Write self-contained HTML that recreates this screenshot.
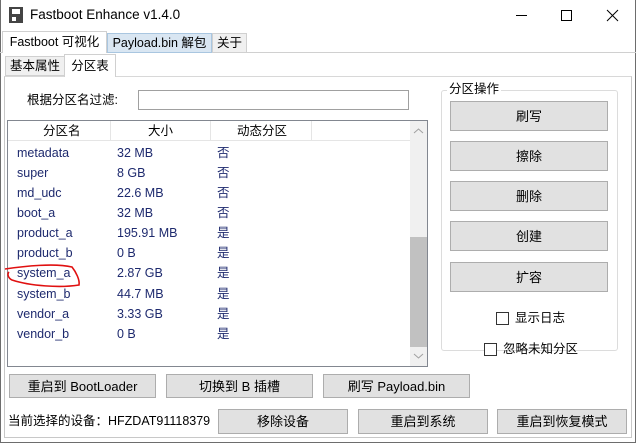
<!DOCTYPE html>
<html><head><meta charset="utf-8"><style>
*{margin:0;padding:0;box-sizing:border-box}
body{width:636px;height:443px;background:#fff;font-family:"Liberation Sans","Noto Sans CJK SC",sans-serif;font-size:12.5px;line-height:15px;color:#000;position:relative;overflow:hidden}
.a{position:absolute}
.btn{position:absolute;background:#e1e1e1;border:1px solid #adadad;text-align:center;font-size:13px;display:flex;align-items:center;justify-content:center}
.tab{position:absolute;border:1px solid #d0d0d0;background:#f0f0f0;font-size:12.5px;display:flex;align-items:center;justify-content:center}
.r{position:absolute;left:17px;color:#1e2a6e}
.c2{position:absolute;left:117px;color:#1e2a6e}
.c3{position:absolute;left:217px;color:#1e2a6e;margin-top:0}
.cb{position:absolute;width:13px;height:13px;border:1px solid #333;background:#fff}
</style></head><body>
<div class="a" style="left:0;top:0;width:636px;height:443px;border:1px solid #6d6d6d;border-top:none"></div>
<svg class="a" style="left:8px;top:6px" width="16" height="18"><rect x="1" y="1" width="14" height="16" fill="#444"/><rect x="4" y="3" width="8" height="5" fill="#fff"/><rect x="4" y="11" width="4" height="4" fill="#fff"/></svg>
<div class="a" style="left:30px;top:7px;font-size:13.5px">Fastboot Enhance v1.4.0</div>
<div class="a" style="left:516px;top:15px;width:11px;height:1px;background:#000"></div>
<div class="a" style="left:561px;top:10px;width:11px;height:11px;border:1px solid #000"></div>
<svg class="a" style="left:606px;top:9px" width="13" height="13"><path d="M1 1L12 12M12 1L1 12" stroke="#000" stroke-width="1"/></svg>
<div class="a" style="left:0;top:52px;width:636px;height:1px;background:#d0d0d0"></div>
<div class="tab" style="left:2px;top:31px;width:105px;height:22px;background:#fff;border-bottom:none">Fastboot 可视化</div>
<div class="tab" style="left:107px;top:33px;width:105px;height:20px;background:#d9e6f2;border-color:#a9c6e0">Payload.bin 解包</div>
<div class="tab" style="left:212px;top:33px;width:35px;height:20px">关于</div>
<div class="a" style="left:4px;top:76px;width:628px;height:362px;border:1px solid #c8c8c8;border-top-color:#d8d8d8"></div>
<div class="tab" style="left:5px;top:56px;width:60px;height:20px">基本属性</div>
<div class="tab" style="left:64px;top:54px;width:52px;height:23px;background:#fff;border-bottom:none">分区表</div>
<div class="a" style="left:27px;top:93px">根据分区名过滤:</div>
<div class="a" style="left:138px;top:90px;width:271px;height:20px;border:1px solid #a0a0a0"></div>
<div class="a" style="left:7px;top:120px;width:421px;height:247px;border:1px solid #828790"></div>
<div class="a" style="left:8px;top:121px;width:402px;height:20px;border-bottom:1px solid #e5e5e5"></div>
<div class="a" style="left:110px;top:121px;width:1px;height:20px;background:#e5e5e5"></div>
<div class="a" style="left:210px;top:121px;width:1px;height:20px;background:#e5e5e5"></div>
<div class="a" style="left:311px;top:121px;width:1px;height:20px;background:#e5e5e5"></div>
<div class="a" style="left:43px;top:124px">分区名</div>
<div class="a" style="left:148px;top:124px">大小</div>
<div class="a" style="left:237px;top:124px">动态分区</div>
<div class="a" style="left:410px;top:121px;width:17px;height:245px;background:#f0f0f0"></div>
<div class="a" style="left:410px;top:237px;width:17px;height:110px;background:#c1c1c1"></div>
<svg class="a" style="left:413px;top:127px" width="11" height="8"><path d="M1 6L5.5 2L10 6" stroke="#a0a0a0" fill="none"/></svg>
<svg class="a" style="left:413px;top:352px" width="11" height="8"><path d="M1 2L5.5 6L10 2" stroke="#a0a0a0" fill="none"/></svg>
<div class="r" style="top:146px">metadata</div><div class="c2" style="top:146px">32 MB</div><div class="c3" style="top:146px">否</div>
<div class="r" style="top:166px">super</div><div class="c2" style="top:166px">8 GB</div><div class="c3" style="top:166px">否</div>
<div class="r" style="top:186px">md_udc</div><div class="c2" style="top:186px">22.6 MB</div><div class="c3" style="top:186px">否</div>
<div class="r" style="top:206px">boot_a</div><div class="c2" style="top:206px">32 MB</div><div class="c3" style="top:206px">否</div>
<div class="r" style="top:226px">product_a</div><div class="c2" style="top:226px">195.91 MB</div><div class="c3" style="top:226px">是</div>
<div class="r" style="top:246px">product_b</div><div class="c2" style="top:246px">0 B</div><div class="c3" style="top:246px">是</div>
<div class="r" style="top:266px">system_a</div><div class="c2" style="top:266px">2.87 GB</div><div class="c3" style="top:266px">是</div>
<div class="r" style="top:287px">system_b</div><div class="c2" style="top:287px">44.7 MB</div><div class="c3" style="top:287px">是</div>
<div class="r" style="top:307px">vendor_a</div><div class="c2" style="top:307px">3.33 GB</div><div class="c3" style="top:307px">是</div>
<div class="r" style="top:327px">vendor_b</div><div class="c2" style="top:327px">0 B</div><div class="c3" style="top:327px">是</div>
<svg class="a" style="left:0;top:260px" width="90" height="35"><path d="M5 9C25 6 55 3 72 7C76 12 80 20 79 25C60 28 30 26 12 20C8 18 7 14 9 12" stroke="#e01010" stroke-width="1.6" fill="none"/></svg>
<div class="a" style="left:441px;top:90px;width:177px;height:261px;border:1px solid #dcdcdc;border-radius:3px"></div>
<div class="a" style="left:447px;top:82px;background:#fff;padding:0 2px">分区操作</div>
<div class="btn" style="left:450px;top:101px;width:158px;height:30px">刷写</div>
<div class="btn" style="left:450px;top:141px;width:158px;height:30px">擦除</div>
<div class="btn" style="left:450px;top:181px;width:158px;height:30px">删除</div>
<div class="btn" style="left:450px;top:221px;width:158px;height:30px">创建</div>
<div class="btn" style="left:450px;top:262px;width:158px;height:30px">扩容</div>
<div class="cb" style="left:496px;top:312px"></div><div class="a" style="left:515px;top:311px">显示日志</div>
<div class="cb" style="left:484px;top:343px"></div><div class="a" style="left:503px;top:342px">忽略未知分区</div>
<div class="btn" style="left:9px;top:374px;width:147px;height:24px">重启到 BootLoader</div>
<div class="btn" style="left:166px;top:374px;width:147px;height:24px">切换到 B 插槽</div>
<div class="btn" style="left:323px;top:374px;width:147px;height:24px">刷写 Payload.bin</div>
<div class="a" style="left:8px;top:414px;font-size:12.5px">当前选择的设备：HFZDAT91118379</div>
<div class="btn" style="left:218px;top:409px;width:130px;height:25px">移除设备</div>
<div class="btn" style="left:358px;top:409px;width:130px;height:25px">重启到系统</div>
<div class="btn" style="left:497px;top:409px;width:130px;height:25px">重启到恢复模式</div>
</body></html>
